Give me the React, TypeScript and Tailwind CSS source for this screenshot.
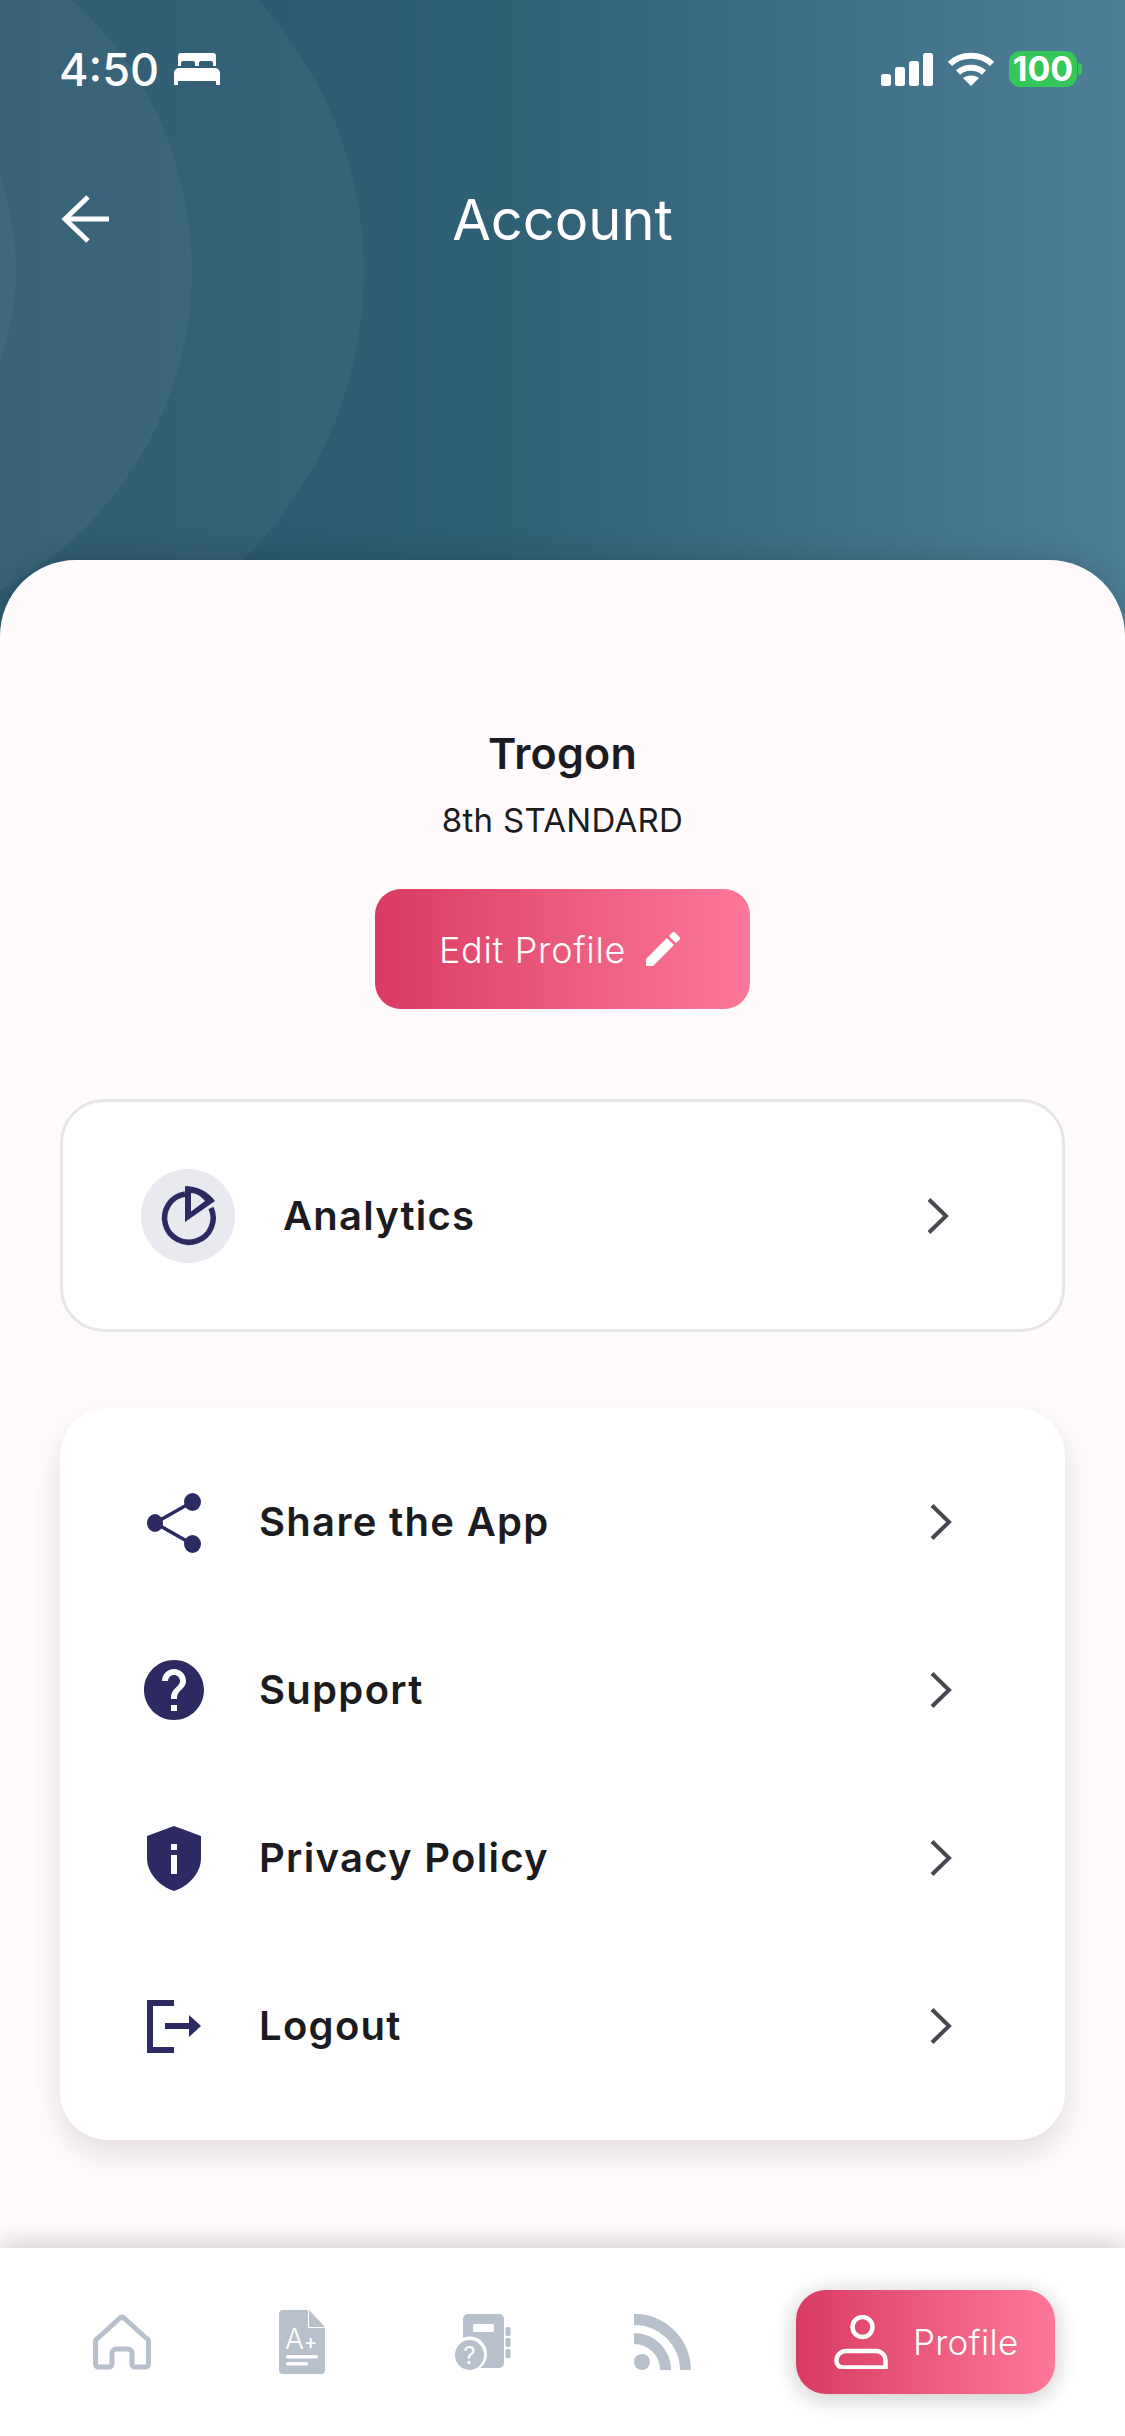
const NAVY = "#2d2a63";
const GREY = "#b8c0cc";

function Chevron({ className = "" }: { className?: string }) {
  return (
    <svg width="22" height="38" viewBox="0 0 22 38" fill="none" className={className}>
      <path d="M2 2.500L19 19L2 35.500" stroke="#48474f" strokeWidth="4" />
    </svg>
  );
}

function ChartIcon() {
  return (
    <svg width="94" height="94" viewBox="0 0 94 94" fill="none">
      <path d="M44 25A24.300 24.300 0 1 0 70 39" stroke={NAVY} strokeWidth="5.500" />
      <path fillRule="evenodd" fill={NAVY} d="M44 17C55 17 67 22 74 32L44 53ZM50 24C55 24 60 27 64 32L50 42.500Z" />
    </svg>
  );
}

function ShareIcon() {
  return (
    <svg width="54" height="61" viewBox="0 0 54 61" fill={NAVY}>
      <path d="M45 10L8 31L45 52" fill="none" stroke={NAVY} strokeWidth="3.500" />
      <ellipse cx="8" cy="31" rx="8" ry="9" />
      <ellipse cx="45.500" cy="10" rx="8.500" ry="9" />
      <ellipse cx="45.500" cy="52" rx="8.500" ry="9" />
    </svg>
  );
}

function HelpIcon() {
  return (
    <svg width="60" height="60" viewBox="2 2 20 20" fill={NAVY}>
      <path d="M12 2C6.48 2 2 6.48 2 12s4.48 10 10 10 10-4.48 10-10S17.52 2 12 2zm1 17h-2v-2h2v2zm2.07-7.75l-.9.92C13.45 12.9 13 13.5 13 15h-2v-.5c0-1.1.45-2.1 1.17-2.83l1.24-1.26c.37-.36.59-.86.59-1.41 0-1.1-.9-2-2-2s-2 .9-2 2H8c0-2.21 1.79-4 4-4s4 1.79 4 4c0 .88-.36 1.68-.93 2.25z" />
    </svg>
  );
}

function ShieldIcon() {
  return (
    <svg width="54" height="65" viewBox="0 0 54 65">
      <path d="M27 0L54 10V32C54 47 42 60 27 65C12 60 0 47 0 32V10Z" fill={NAVY} />
      <rect x="24" y="18" width="6" height="6" fill="#fff" />
      <rect x="24" y="29" width="6" height="19" fill="#fff" />
    </svg>
  );
}

function LogoutIcon() {
  return (
    <svg width="54" height="53" viewBox="0 0 54 53" fill="none">
      <path d="M27 3H3V50H27" stroke={NAVY} strokeWidth="6" />
      <path d="M18 26H44" stroke={NAVY} strokeWidth="6" />
      <path d="M42 15L54 26L42 37Z" fill={NAVY} />
    </svg>
  );
}

function HomeIcon() {
  return (
    <svg width="58" height="56" viewBox="0 0 58 56" fill="none" stroke={GREY} strokeWidth="5" strokeLinejoin="round">
      <path d="M27.500 3.500a2.500 2.500 0 0 1 3 0L53 24a4 4 0 0 1 2.500 3V50a3 3 0 0 1-3 3H42a3 3 0 0 1-3-3V39a4 4 0 0 0-4-4H23a4 4 0 0 0-4 4V50a3 3 0 0 1-3 3H5.500a3 3 0 0 1-3-3V27a4 4 0 0 1 2.500-3Z" />
    </svg>
  );
}

function GradeIcon() {
  return (
    <svg width="46" height="64" viewBox="0 0 46 64">
      <path d="M4 0H29V17a1 1 0 0 0 1 1H46V60a4 4 0 0 1-4 4H4a4 4 0 0 1-4-4V4a4 4 0 0 1 4-4Z" fill={GREY} />
      <path d="M30 0L46 17H31a1 1 0 0 1-1-1Z" fill={GREY} />
      <text x="6" y="39" fill="#fff" fontSize="28" fontFamily="Inter, sans-serif" fontWeight="300">A</text>
      <text x="25" y="39" fill="#fff" fontSize="20" fontFamily="Inter, sans-serif" fontWeight="500">+</text>
      <rect x="7" y="45" width="32" height="3.500" rx="1.500" fill="#fff" />
      <rect x="7" y="52" width="22" height="3.500" rx="1.500" fill="#fff" />
    </svg>
  );
}

function QuizIcon() {
  return (
    <svg width="57" height="56" viewBox="0 0 57 56">
      <rect x="9" y="0" width="41" height="54" rx="5" fill={GREY} />
      <rect x="19" y="10" width="21" height="8" rx="1.500" fill="#fff" />
      <rect x="51.500" y="13" width="5" height="9" rx="1.500" fill={GREY} />
      <rect x="51.500" y="24" width="5" height="9" rx="1.500" fill={GREY} />
      <rect x="51.500" y="35" width="5" height="9" rx="1.500" fill={GREY} />
      <ellipse cx="16" cy="40" rx="17" ry="17.500" fill="#fff" />
      <ellipse cx="15.500" cy="41" rx="14.500" ry="15" fill={GREY} />
      <text x="15.500" y="50" textAnchor="middle" fill="#fff" fontSize="24" fontFamily="Inter, sans-serif">?</text>
    </svg>
  );
}

function FeedIcon() {
  return (
    <svg width="57" height="56" viewBox="0 0 57 56" fill="none" stroke={GREY} strokeWidth="11">
      <path d="M0 5.500A51 51 0 0 1 51.500 56" />
      <path d="M0 24.500A31.500 31.500 0 0 1 31.500 56" />
      <ellipse cx="8" cy="48" rx="8" ry="8" fill={GREY} stroke="none" />
    </svg>
  );
}

function ProfileIcon() {
  return (
    <svg width="54" height="54" viewBox="0 0 54 54" fill="none" stroke="#fff" strokeWidth="4.500">
      <circle cx="28.500" cy="12" r="10" />
      <path d="M12 36H42a9.500 9.500 0 0 1 9.500 9.500V52.500H9a6.500 6.500 0 0 1-6.500-6.500V45.500A9.500 9.500 0 0 1 12 36Z" />
    </svg>
  );
}

const rows = [
  { label: "Share the App", icon: <ShareIcon /> },
  { label: "Support", icon: <HelpIcon /> },
  { label: "Privacy Policy", icon: <ShieldIcon /> },
  { label: "Logout", icon: <LogoutIcon /> },
];

export default function App() {
  return (
    <div className="flex h-[2436px] w-[1125px] flex-col overflow-hidden bg-[#fffbfc] font-['Inter',sans-serif] text-[#1c1b20]">
      <header className="relative h-[640px] shrink-0 overflow-hidden bg-gradient-to-r from-[#27566e] via-[#306076] via-45% to-[#4e7f98] text-white">
        <div className="absolute left-[-440px] top-[-130px] h-[804px] w-[804px] rounded-full bg-white/[0.04]" />
        <div className="absolute left-[-536px] top-[-94px] h-[728px] w-[728px] rounded-full bg-white/[0.04]" />
        <div className="absolute left-[-540px] top-[-8px] h-[556px] w-[556px] rounded-full bg-white/[0.04]" />

        <div className="relative mt-[45px] flex h-[48px] items-center justify-between pl-[59px] pr-[43px]">
          <div className="flex items-center gap-[15px]">
            <span className="text-[45px] font-medium leading-none">4:50</span>
            <svg width="46" height="32" viewBox="0 0 46 32" fill="#fff">
              <path d="M7 0H39a3 3 0 0 1 3 3V13H39V10a2 2 0 0 0-2-2H27a2 2 0 0 0-2 2V13H21V10a2 2 0 0 0-2-2H9a2 2 0 0 0-2 2V13H4V3a3 3 0 0 1 3-3Z" />
              <path d="M5 15H41a5 5 0 0 1 5 5V32H42V28H4V32H0V20a5 5 0 0 1 5-5Z" />
            </svg>
          </div>
          <div className="flex items-center">
            <svg width="52" height="33" viewBox="0 0 52 33" fill="#fff">
              <rect x="0" y="21" width="10" height="12" rx="2.500" />
              <rect x="14" y="14" width="10" height="19" rx="2.500" />
              <rect x="28" y="8" width="10" height="25" rx="2.500" />
              <rect x="42" y="0" width="10" height="33" rx="2.500" />
            </svg>
            <svg className="ml-[15px]" width="46" height="34" viewBox="0 0 46 34" fill="none" stroke="#fff" strokeWidth="6">
              <path d="M2 12C13 1 33 1 44 12" />
              <path d="M10 20.500C17 14 29 14 36 20.500" />
              <path d="M23 34L15 26C19 22.500 27 22.500 31 26Z" fill="#fff" stroke="none" />
            </svg>
            <div className="ml-[15px] flex h-[36px] w-[68px] items-center justify-center rounded-[11px] bg-[#34c759] text-[34px] font-bold leading-none text-white">100</div>
            <div className="ml-[1px] h-[12px] w-[4px] rounded-r-full bg-[#34c759]" />
          </div>
        </div>

        <div className="relative mt-[97px] flex h-[60px] items-center justify-center">
          <svg className="absolute left-[60px] top-[5px]" width="50" height="48" viewBox="0 0 50 48" fill="none" stroke="#fff" strokeWidth="5">
            <path d="M49 24H4" />
            <path d="M28 2L5 24L28 46" />
          </svg>
          <h1 className="text-[56px] font-normal leading-none">Account</h1>
        </div>
      </header>

      <main className="relative z-10 mt-[-80px] flex min-h-0 flex-1 flex-col items-center rounded-t-[76px] bg-[#fffbfc] pt-[168px] shadow-[0_0_30px_rgba(0,0,0,0.18)]">
        <h2 className="text-[43px] font-semibold leading-[50px] tracking-[0.2px]">Trogon</h2>
        <p className="mt-[22px] text-[33px] leading-[40px] tracking-[0.3px]">8th STANDARD</p>
        <button className="mt-[49px] flex h-[120px] w-[375px] items-center justify-center gap-[20px] rounded-[26px] bg-gradient-to-r from-[#d93a63] to-[#fd7799] pr-[6px] text-[36px] font-light tracking-[0.7px] text-white">
          <span className="pt-[2px]">Edit Profile</span>
          <svg width="34" height="34" viewBox="3 3 18 18" fill="#fff">
            <path d="M3 17.250V21h3.750L17.810 9.940l-3.750-3.750L3 17.250zM20.710 7.040c.39-.39.39-1.020 0-1.410l-2.340-2.340c-.39-.39-1.020-.39-1.410 0l-1.830 1.830 3.750 3.750 1.830-1.830z" />
          </svg>
        </button>

        <section className="mt-[90px] flex h-[233px] w-[1005px] items-center rounded-[44px] border-[3px] border-[#e6e6e6] bg-white pl-[78px] pr-[113px]">
          <div className="flex h-[94px] w-[94px] items-center justify-center rounded-full bg-[#e9e9f0]">
            <ChartIcon />
          </div>
          <span className="ml-[48px] flex-1 text-[40px] font-semibold tracking-[1.200px]">Analytics</span>
          <Chevron />
        </section>

        <section className="mt-[76px] flex h-[732px] w-[1005px] flex-col justify-center rounded-[48px] bg-white pl-[84px] pr-[113px] shadow-[0_14px_32px_rgba(60,40,50,0.14)]">
          {rows.map((r) => (
            <div key={r.label} className="flex h-[168px] items-center">
              <div className="flex w-[60px] justify-center">{r.icon}</div>
              <span className="ml-[55px] flex-1 text-[40px] font-semibold tracking-[1.300px]">{r.label}</span>
              <Chevron />
            </div>
          ))}
        </section>
      </main>

      <nav className="relative z-20 flex h-[188px] shrink-0 items-center bg-white pl-[32px] shadow-[0_-2px_26px_rgba(0,0,0,0.22)]">
        <div className="flex w-[180px] justify-center"><HomeIcon /></div>
        <div className="flex w-[180px] justify-center"><GradeIcon /></div>
        <div className="flex w-[180px] justify-center"><QuizIcon /></div>
        <div className="flex w-[180px] justify-center"><FeedIcon /></div>
        <div className="ml-[44px] flex h-[104px] w-[259px] items-center rounded-[30px] bg-gradient-to-r from-[#d93a63] to-[#fd7799] pl-[38px] text-[35px] font-light tracking-[0.3px] text-white shadow-[0_4px_24px_rgba(0,0,0,0.22)]">
          <ProfileIcon />
          <span className="ml-[25px]">Profile</span>
        </div>
      </nav>
    </div>
  );
}
